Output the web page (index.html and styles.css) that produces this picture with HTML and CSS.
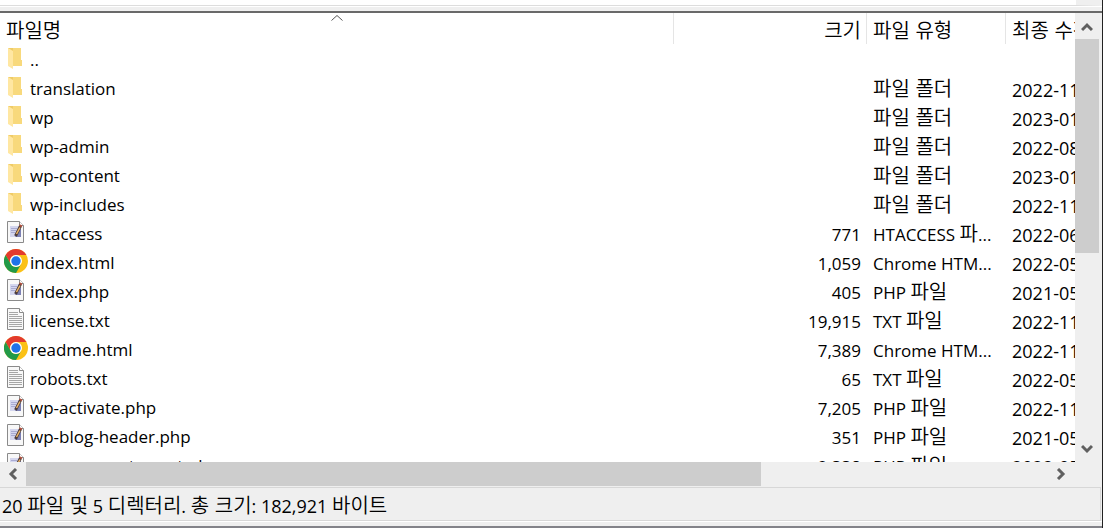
FILE: index.html
```html
<!DOCTYPE html>
<html lang="ko">
<head>
  <meta charset="UTF-8">
  <meta name="viewport" content="width=device-width, initial-scale=1.0">
  <title>파일 목록</title>
  <link rel="stylesheet" href="styles.css">
</head>
<body>
  <svg class="defs" aria-hidden="true">
    <symbol id="folder" viewBox="0 0 24 24">
      <path d="M4 2h13v12h1v6H8z" fill="#f8d97c"/>
      <path d="M4 2h5v18H8z" fill="#efcb66"/>
      <path d="M4 2l5 3v18l-5-3z" fill="#ffe7a2"/>
    </symbol>
    <symbol id="php" viewBox="0 0 24 24">
      <path d="M3.500 1.500h12l4 4v17h-16z" fill="#f8f8f8" stroke="#8a8a8a"/>
      <path d="M15.500 1.500v4h4" fill="#fff" stroke="#8a8a8a"/>
      <path d="M6 6h10v11H6z" fill="#d4d6ee"/>
      <path d="M7 8.500h6M7 10.500h5M7 12.500h4" stroke="#a9abd2"/>
      <path d="M11 17h6V8z" fill="#7c80b4"/>
      <path d="M16.500 6l-5 10" stroke="#4a3a3a" stroke-width="3"/>
      <path d="M16 7.500l-3.500 6.500" stroke="#eeb565" stroke-width="1.500"/>
      <path d="M15.500 5l2.500 1.500" stroke="#b8503c" stroke-width="1.500"/>
    </symbol>
    <symbol id="txt" viewBox="0 0 24 24">
      <path d="M3.500 1.500h12l4 4v17h-16z" fill="#f8f8f8" stroke="#8a8a8a"/>
      <path d="M15.500 1.500v4h4" fill="#fff" stroke="#8a8a8a"/>
      <path d="M5 5.500h9M5 7.500h9M5 9.500h13M5 11.500h13M5 13.500h13M5 15.500h13M5 17.500h13M5 19.500h13" stroke="#a6a6a6"/>
    </symbol>
    <symbol id="chrome" viewBox="0 0 24 24">
      <circle cx="12" cy="12" r="12" fill="#fbc116"/>
      <path d="M1.600 6A12 12 0 0 1 22.400 6H12a6 6 0 0 0-5.200 9z" fill="#e33b2e"/>
      <path d="M1.600 6A12 12 0 0 0 12 24l5.200-9A6 6 0 0 1 6.800 15z" fill="#229a48"/>
      <circle cx="12" cy="12" r="6" fill="#fff"/>
      <circle cx="12" cy="12" r="4.700" fill="#1f73e8"/>
    </symbol>
  </svg>

  <div class="window">
    <div class="upper-pane"></div>
    <div class="splitter"></div>

    <div class="list-pane">
      <div class="list">
        <table>
          <colgroup>
            <col>
            <col class="col-size">
            <col class="col-type">
            <col class="col-date">
          </colgroup>
          <thead>
            <tr>
              <th>파일명
                <svg class="sort" viewBox="0 0 12 6"><path d="M.5 5.500L6 .5l5.500 5" fill="none" stroke="#555"/></svg>
              </th>
              <th class="size">크기</th>
              <th>파일 유형</th>
              <th>최종 수정</th>
            </tr>
          </thead>
          <tbody id="files"></tbody>
        </table>
      </div>
      <div class="vscroll">
        <button class="arrow" aria-label="위로"><svg viewBox="0 0 12 12"><path d="M1 10l5-5 5 5"/></svg></button>
        <div class="vtrack"><div class="vthumb"></div></div>
        <button class="arrow" aria-label="아래로"><svg viewBox="0 0 12 12"><path d="M1 3l5 5 5-5"/></svg></button>
      </div>
    </div>

    <div class="hscroll">
      <button class="arrow" aria-label="왼쪽"><svg viewBox="0 0 12 12"><path d="M9 1L4 6l5 5"/></svg></button>
      <div class="htrack"><div class="hthumb"></div></div>
      <button class="arrow" aria-label="오른쪽"><svg viewBox="0 0 12 12"><path d="M4 1l5 5-5 5"/></svg></button>
    </div>

    <div class="status">20 <span class="ko">파일 및</span> 5 <span class="ko">디렉터리</span>. <span class="ko">총 크기</span>: 182,921 <span class="ko">바이트</span></div>
    <div class="bottom-edge"></div>
  </div>

  <script>
    const files = [
      ['folder', '..', '', '', ''],
      ['folder', 'translation', '', '파일 폴더', '2022-11-16'],
      ['folder', 'wp', '', '파일 폴더', '2023-01-10'],
      ['folder', 'wp-admin', '', '파일 폴더', '2022-08-24'],
      ['folder', 'wp-content', '', '파일 폴더', '2023-01-10'],
      ['folder', 'wp-includes', '', '파일 폴더', '2022-11-16'],
      ['php', '.htaccess', '771', 'HTACCESS 파...', '2022-06-10'],
      ['chrome', 'index.html', '1,059', 'Chrome HTM...', '2022-05-20'],
      ['php', 'index.php', '405', 'PHP 파일', '2021-05-12'],
      ['txt', 'license.txt', '19,915', 'TXT 파일', '2022-11-16'],
      ['chrome', 'readme.html', '7,389', 'Chrome HTM...', '2022-11-16'],
      ['txt', 'robots.txt', '65', 'TXT 파일', '2022-05-20'],
      ['php', 'wp-activate.php', '7,205', 'PHP 파일', '2022-11-16'],
      ['php', 'wp-blog-header.php', '351', 'PHP 파일', '2021-05-12'],
      ['php', 'wp-comments-post.php', '2,338', 'PHP 파일', '2022-05-20']
    ];

    const body = document.getElementById('files');

    // Hangul is set a little larger than the Latin text beside it
    function markHangul(text) {
      return text.replace(/[가-힣]+( [가-힣]+)*/g, '<span class="ko">$&</span>');
    }

    files.forEach(function(file) {
      const row = document.createElement('tr');
      row.innerHTML =
        '<td class="name"><div class="file"><svg class="icon"><use href="#' + file[0] + '"/></svg><span class="label">' + file[1] + '</span></div></td>' +
        '<td class="size">' + file[2] + '</td>' +
        '<td>' + markHangul(file[3]) + '</td>' +
        '<td class="date">' + file[4] + '</td>';
      body.appendChild(row);
    });
  </script>
</body>
</html>
```
FILE: styles.css
```css
* {
  box-sizing: border-box;
}
body {
  margin: 0;
  height: 100vh;
  overflow: hidden;
  background-color: #efefef;
  color: #000;
  font-family: "Open Sans", "Noto Sans CJK KR", sans-serif;
  font-size: 17px;
  line-height: 28px;
}
.defs {
  display: none;
}
.ko,
th {
  font-family: "Noto Sans CJK KR", sans-serif;
  font-size: 20px;
  font-weight: 350;
  line-height: 28px;
}
.ko {
  line-height: 20px;
}
.window {
  display: flex;
  flex-direction: column;
  height: 100%;
  border-right: 1px solid #222;
}
.upper-pane {
  height: 6px;
  margin-right: 2px;
  border-bottom: 1px solid #ddd;
  border-right: 24px solid #efefef;
  background-color: #fff;
}
.splitter {
  height: 7px;
  border-top: 1px solid #fff;
  border-bottom: 2px solid #696969;
}
.list-pane {
  display: flex;
  flex: 1;
  min-height: 0;
  padding-right: 3px;
}
.list {
  flex: 1;
  min-width: 0;
  overflow: hidden;
  background-color: #fff;
}
table {
  width: 100%;
  table-layout: fixed;
  border-collapse: collapse;
}
.col-size {
  width: 193px;
}
.col-type {
  width: 139px;
}
.col-date {
  width: 69px;
}
th,
td {
  padding: 0 0 0 6px;
  text-align: left;
  white-space: nowrap;
  overflow: hidden;
}
th {
  position: relative;
  height: 33px;
  background: linear-gradient(#e5e5e5, #e5e5e5) right top / 1px 31px no-repeat;
}
th:last-child {
  background: none;
}
td {
  height: 29px;
}
td.name {
  padding-left: 4px;
}
.date {
  font-size: 18px;
}
.size {
  padding-right: 6px;
  text-align: right;
}
.sort {
  position: absolute;
  top: 2px;
  left: 50%;
  width: 12px;
  height: 6px;
  margin-left: -6px;
}
.file {
  display: flex;
  gap: 2px;
  height: 29px;
}
.icon {
  flex: none;
  width: 24px;
  height: 24px;
}
.vscroll {
  display: flex;
  flex-direction: column;
  width: 24px;
}
.arrow {
  display: flex;
  flex: none;
  align-items: center;
  justify-content: center;
  width: 26px;
  height: 24px;
  padding: 0;
  border: none;
  background-color: transparent;
}
.vscroll .arrow {
  width: 24px;
  height: 26px;
}
.arrow svg {
  width: 12px;
  height: 12px;
  fill: none;
  stroke: #606060;
  stroke-width: 3;
}
.vtrack,
.htrack {
  flex: 1;
}
.vthumb {
  height: 54%;
  background-color: #cdcdcd;
}
.hscroll {
  display: flex;
  height: 25px;
  padding-right: 29px;
}
.hthumb {
  width: 72%;
  height: 24px;
  background-color: #cdcdcd;
}
.status {
  height: 34px;
  margin-right: 1px;
  padding: 4px 2px;
  border-top: 1px solid #d7d7d7;
  border-right: 1px solid #d7d7d7;
  border-bottom: 1px solid #d7d7d7;
  font-size: 18px;
}
.bottom-edge {
  height: 7px;
  border-top: 1px solid #fff;
  border-bottom: 2px solid #838389;
}
```
